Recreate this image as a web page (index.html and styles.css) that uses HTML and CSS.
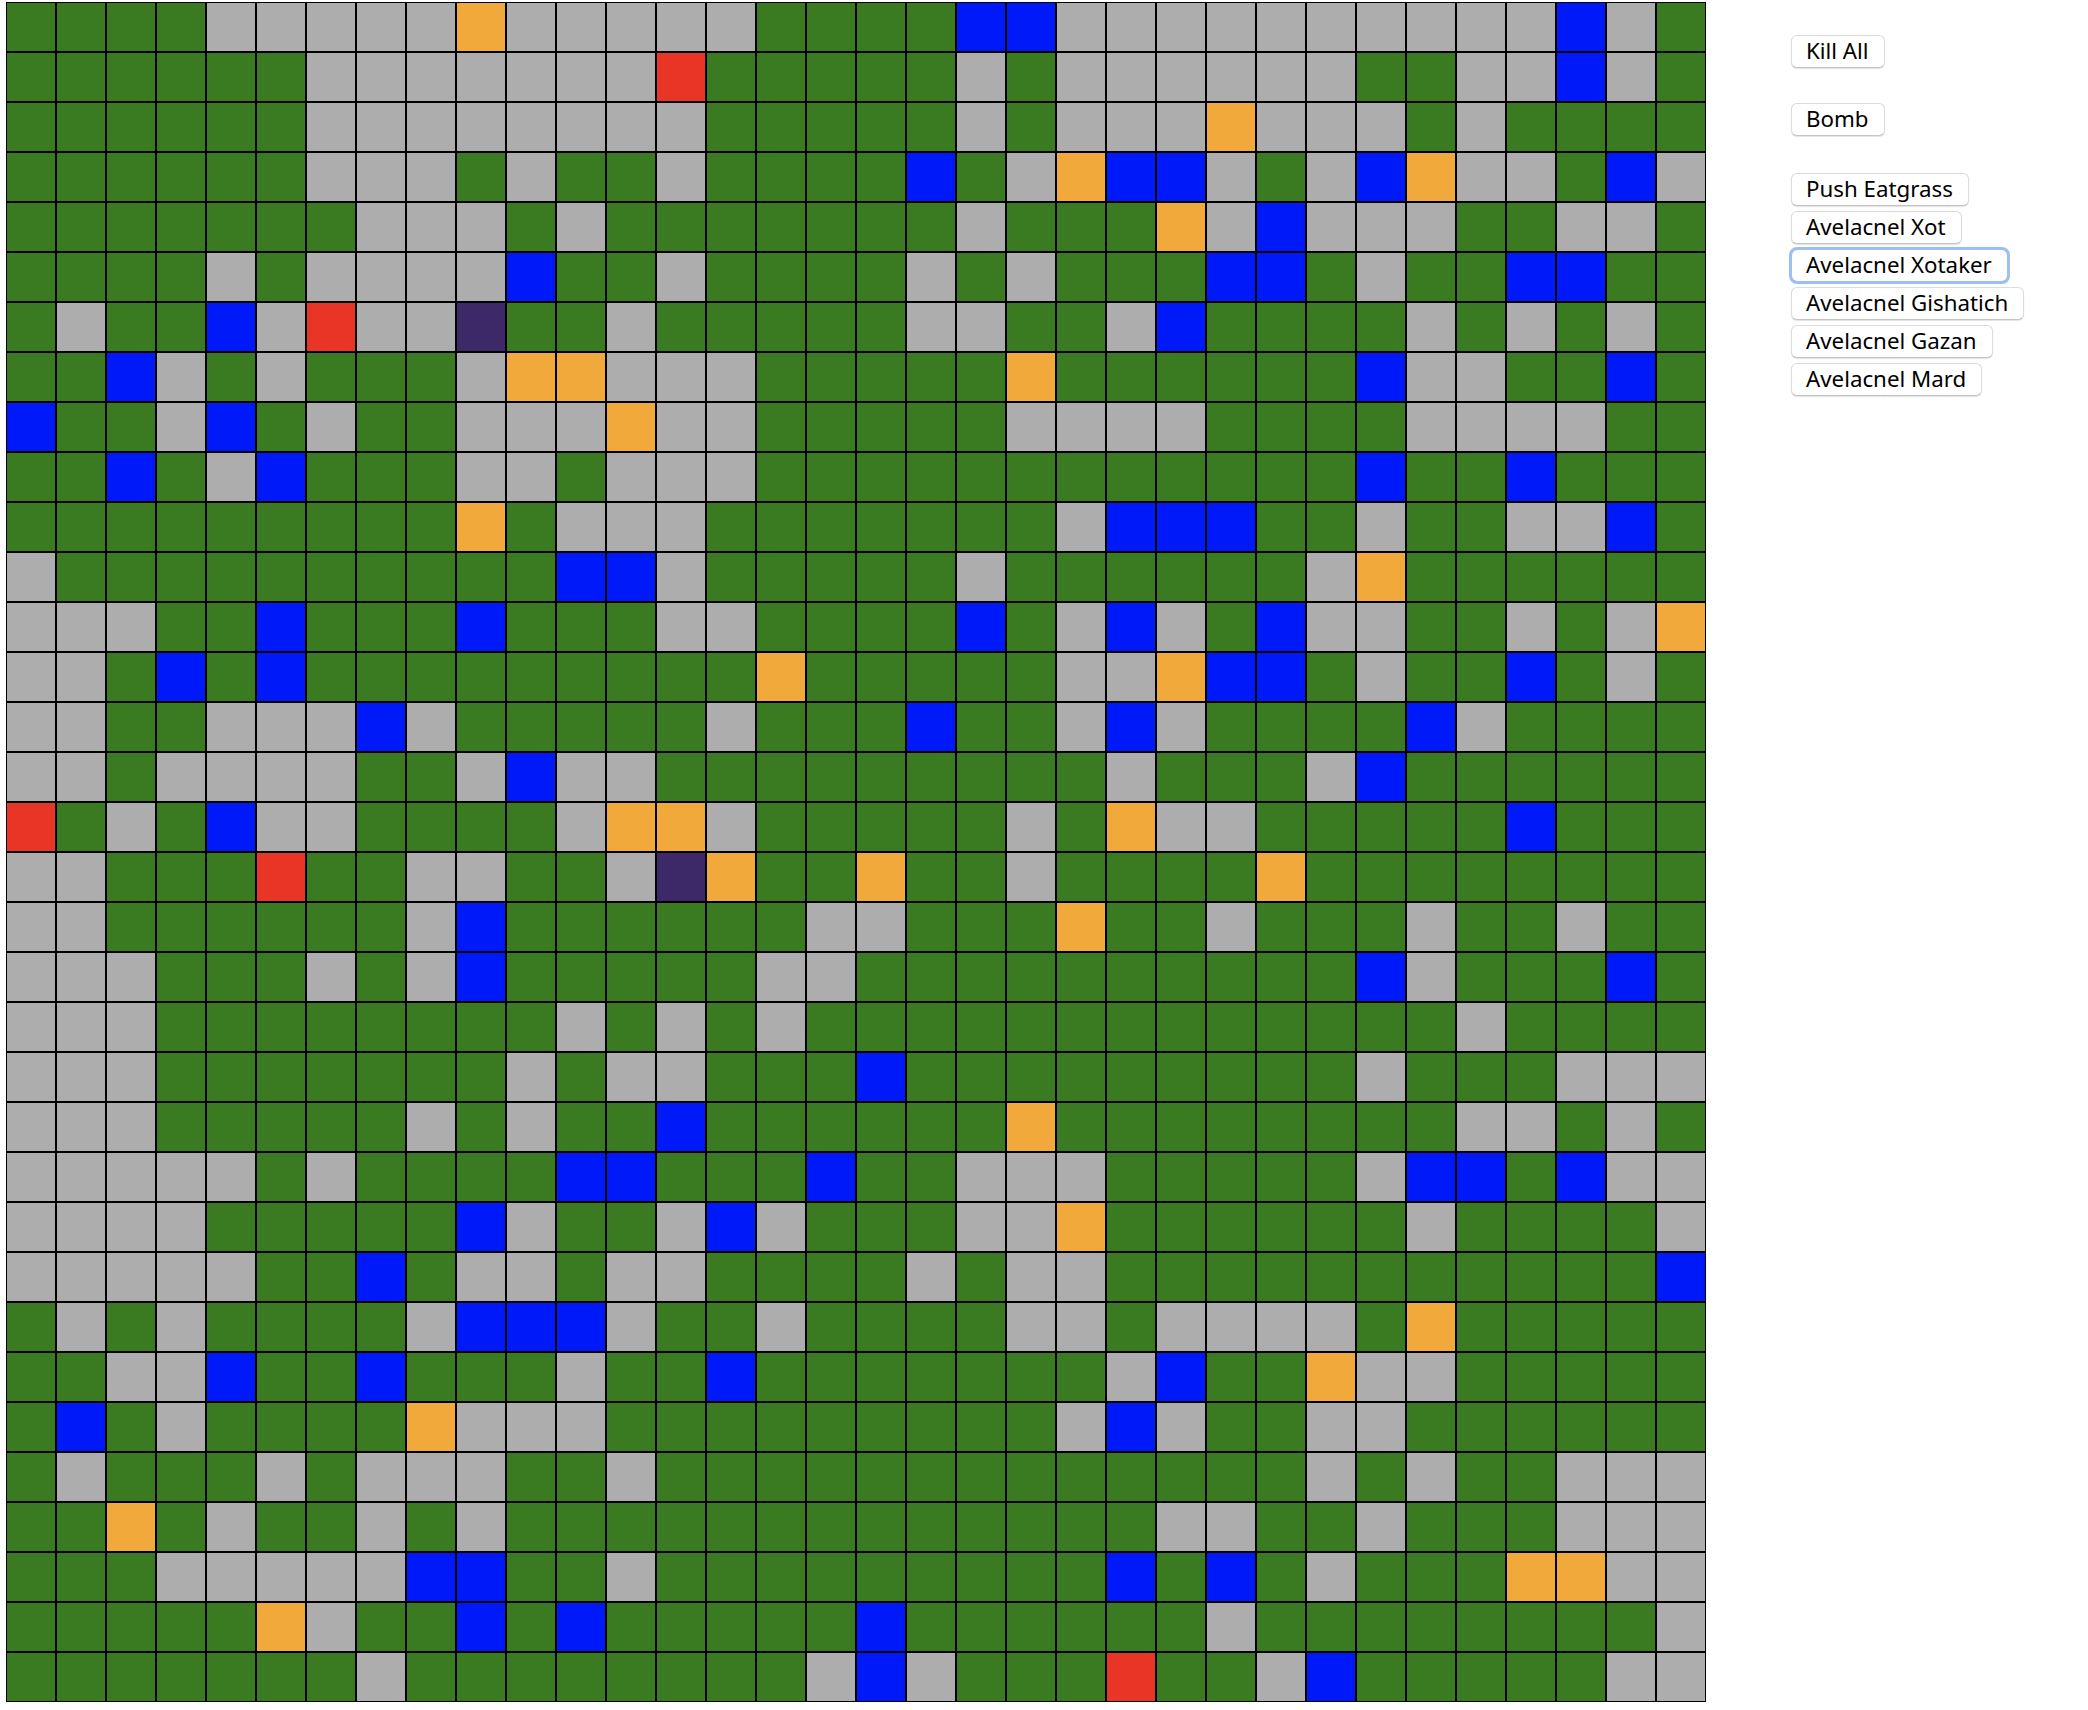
FILE: index.html
```html
<!DOCTYPE html>
<html lang="en">
<head>
<meta charset="utf-8">
<title>Avelacnel</title>
<link rel="stylesheet" href="styles.css">
</head>
<body>
<main class="game">
  <div class="board" id="board"></div>
  <aside class="controls">
    <div class="group group-kill"><button class="btn" type="button">Kill All</button></div>
    <div class="group group-bomb"><button class="btn" type="button">Bomb</button></div>
    <div class="group group-units">
      <button class="btn" type="button">Push Eatgrass</button>
      <button class="btn" type="button">Avelacnel Xot</button>
      <button class="btn btn-focus" type="button">Avelacnel Xotaker</button>
      <button class="btn" type="button">Avelacnel Gishatich</button>
      <button class="btn" type="button">Avelacnel Gazan</button>
      <button class="btn" type="button">Avelacnel Mard</button>
    </div>
  </aside>
</main>
<script src="grid.js"></script>
</body>
</html>
```
FILE: styles.css
```css
html, body {
  margin: 0;
  padding: 0;
  background: #fff;
}

.game {
  display: flex;
  align-items: flex-start;
  padding: 2px 0 0 6px;
  width: 2082px;
  height: 1708px;
}

.board {
  display: grid;
  grid-template-columns: repeat(34, 50px);
  grid-auto-rows: 50px;
  flex: none;
}

.cell {
  box-sizing: border-box;
  border: 1px solid #000;
}

.g { background: #3a7a20; }
.s { background: #adadad; }
.b { background: #0019f9; }
.o { background: #f1a93c; }
.r { background: #e83526; }
.p { background: #3d2967; }

.controls {
  margin-left: 85px;
  display: flex;
  flex-direction: column;
  align-items: flex-start;
  padding-top: 33px;
}

.group {
  display: flex;
  flex-direction: column;
  align-items: flex-start;
  gap: 5px;
}

.group-kill { margin-bottom: 35px; }
.group-bomb { margin-bottom: 37px; }

.btn {
  box-sizing: border-box;
  height: 33px;
  padding: 0 15px 0 14px;
  font-family: "Noto Sans", "DejaVu Sans", sans-serif;
  font-size: 22.3px;
  line-height: 1;
  color: #000;
  background: #fff;
  border: 1px solid #dcdcdc;
  border-bottom-color: #c4c4c4;
  border-radius: 6px;
  box-shadow: 0 1px 1px rgba(0, 0, 0, 0.12);
  white-space: nowrap;
}

.btn-focus {
  border-color: #8db5ee;
  outline: 3px solid #9cc0f2;
  outline-offset: -1px;
}
```
FILE: grid.js
```js
var rows = [
  "GGGGSSSSSOSSSSSGG" + "GGBBSSSSSSSSSSBSG",
  "GGGGGGSSSSSSSRGGG" + "GGSGSSSSSSGGSSBSG",
  "GGGGGGSSSSSSSSGGG" + "GGSGSSSOSSSGSGGGG",
  "GGGGGGSSSGSGGSGGG" + "GBGSOBBSGSBOSSGBS",
  "GGGGGGGSSSGSGGGGG" + "GGSGGGOSBSSSGGSSG",
  "GGGGSGSSSSBGGSGGG" + "GSGSGGGBBGSGGBBGG",
  "GSGGBSRSSPGGSGGGG" + "GSSGGSBGGGGSGSGSG",
  "GGBSGSGGGSOOSSSGG" + "GGGOGGGGGGBSSGGBG",
  "BGGSBGSGGSSSOSSGG" + "GGGSSSSGGGGSSSSGG",
  "GGBGSBGGGSSGSSSGG" + "GGGGGGGGGGBGGBGGG",
  "GGGGGGGGGOGSSSGGG" + "GGGGSBBBGGSGGSSBG",
  "SGGGGGGGGGGBBSGGG" + "GGSGGGGGGSOGGGGGG",
  "SSSGGBGGGBGGGSSGG" + "GGBGSBSGBSSGGSGSO",
  "SSGBGBGGGGGGGGGOG" + "GGGGSSOBBGSGGBGSG",
  "SSGGSSSBSGGGGGSGG" + "GBGGSBSGGGGBSGGGG",
  "SSGSSSSGGSBSSGGGG" + "GGGGGSGGGSBGGGGGG",
  "RGSGBSSGGGGSOOSGG" + "GGGSGOSSGGGGGBGGG",
  "SSGGGRGGSSGGSPOGG" + "OGGSGGGGOGGGGGGGG",
  "SSGGGGGGSBGGGGGGS" + "SGGGOGGSGGGSGGSGG",
  "SSSGGGSGSBGGGGGSS" + "GGGGGGGGGGBSGGGBG",
  "SSSGGGGGGGGSGSGSG" + "GGGGGGGGGGGGSGGGG",
  "SSSGGGGGGGSGSSGGG" + "BGGGGGGGGGSGGGSSS",
  "SSSGGGGGSGSGGBGGG" + "GGGOGGGGGGGGSSGSG",
  "SSSSSGSGGGGBBGGGB" + "GGSSSGGGGGSBBGBSS",
  "SSSSGGGGGBSGGSBSG" + "GGSSOGGGGGGSGGGGS",
  "SSSSSGGBGSSGSSGGG" + "GSGSSGGGGGGGGGGGB",
  "GSGSGGGGSBBBSGGSG" + "GGGSSGSSSSGOGGGGG",
  "GGSSBGGBGGGSGGBGG" + "GGGGGSBGGOSSGGGGG",
  "GBGSGGGGOSSSGGGGG" + "GGGGSBSGGSSGGGGGG",
  "GSGGGSGSSSGGSGGGG" + "GGGGGGGGGSGSGGSSS",
  "GGOGSGGSGSGGGGGGG" + "GGGGGGSSGGSGGGSSS",
  "GGGSSSSSBBGGSGGGG" + "GGGGGBGBGSGGGOOSS",
  "GGGGGOSGGBGBGGGGG" + "BGGGGGGSGGGGGGGGS",
  "GGGGGGGSGGGGGGGGS" + "BSGGGRGGSBGGGGGSS"
];

var board = document.getElementById("board");
rows.forEach(function (row) {
  row.split("").forEach(function (kind) {
    var cell = document.createElement("div");
    cell.className = "cell " + kind.toLowerCase();
    board.appendChild(cell);
  });
});
```
